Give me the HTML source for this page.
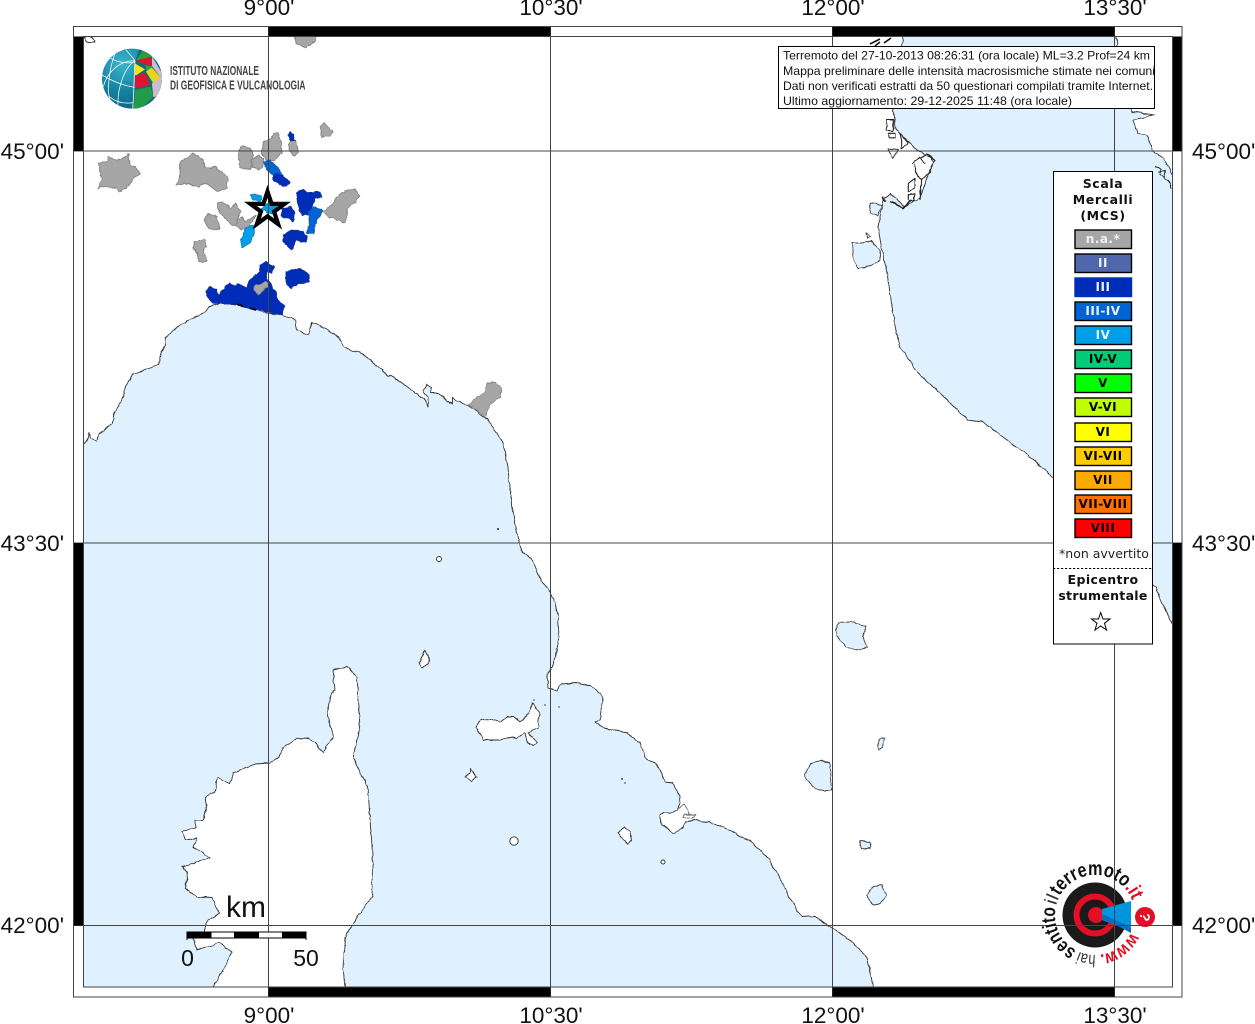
<!DOCTYPE html>
<html><head><meta charset="utf-8"><title>Mappa intensità macrosismiche</title>
<style>
html,body{margin:0;padding:0;background:#fff}
svg{display:block}
.gl{font:22.5px "Liberation Sans",sans-serif;fill:#111}
.hd{font:12px "Liberation Sans",sans-serif;fill:#111}
.lt{font:bold 12.5px "DejaVu Sans",sans-serif;fill:#111;text-anchor:middle;letter-spacing:.6px}
.sw{font:bold 12px "DejaVu Sans",sans-serif;text-anchor:middle;letter-spacing:.5px}
.isl{fill:#fff;stroke:#333;stroke-width:.9;stroke-linejoin:round}
.lake{fill:#dff1ff;stroke:#444;stroke-width:.9;stroke-linejoin:round}
.g{fill:#a6a6a6;stroke:#808080;stroke-width:2.5;stroke-linejoin:round}
.b3{fill:#002db8;stroke:#13309a;stroke-width:2.5;stroke-linejoin:round}
.b34{fill:#0064d2;stroke:#1a55a8;stroke-width:2.5;stroke-linejoin:round}
.b4{fill:#009ee8;stroke:#1b80bb;stroke-width:2.5;stroke-linejoin:round}
</style></head>
<body>
<svg width="1255" height="1024" viewBox="0 0 1255 1024" xmlns="http://www.w3.org/2000/svg">
<defs>
<filter id="rough" filterUnits="userSpaceOnUse" x="0" y="0" width="1255" height="1024" color-interpolation-filters="sRGB">
<feTurbulence type="fractalNoise" baseFrequency=".14" numOctaves="2" seed="4" result="n"/>
<feDisplacementMap in="SourceGraphic" in2="n" scale="3.2" xChannelSelector="R" yChannelSelector="G"/>
</filter>
<filter id="rough2" filterUnits="userSpaceOnUse" x="0" y="0" width="1255" height="1024" color-interpolation-filters="sRGB">
<feTurbulence type="fractalNoise" baseFrequency=".22" numOctaves="2" seed="9" result="n"/>
<feDisplacementMap in="SourceGraphic" in2="n" scale="3" xChannelSelector="R" yChannelSelector="G"/>
</filter>
<clipPath id="inner"><rect x="83.5" y="36.5" width="1089" height="950.5"/></clipPath>
<radialGradient id="gl" cx="35%" cy="25%" r="85%"><stop offset="0" stop-color="#3cb6cf"/><stop offset=".55" stop-color="#14829f"/><stop offset="1" stop-color="#0b5f7c"/></radialGradient>
<clipPath id="gc"><circle cx="126" cy="116" r="90"/></clipPath>
<clipPath id="hc"><rect x="779" y="47" width="375" height="61"/></clipPath>
<path id="arc" d="M1135,915 A40,40 0 1 1 1055,915 A40,40 0 1 1 1135,915"/>
</defs>
<rect width="1255" height="1024" fill="#fff"/>

<g clip-path="url(#inner)">
<g filter="url(#rough)">
<!-- Tyrrhenian / Ligurian sea with Corsica cut out -->
<path fill="#dff1ff" stroke="#333" stroke-width=".9" stroke-linejoin="round" d="M65,450 L83.5,445 L88,438 L89,433 L90,439 L97,441 L98,435 L105,429 L113,423 L113,415 L118,408 L123,397 L125,387 L133,374 L145,370 L158,365 L160,355 L166,345 L165,338 L173,330 L187,321 L200,315 L213,305 L223,302 L237,305 L253,309 L268,313 L280,315 L295,319 L297,330 L309,335 L312,323 L328,330 L340,338 L342,345 L350,350 L360,352 L373,363 L382,369 L388,377 L392,376 L405,385 L425,400 L428,407 L428,398 L423,390 L427,385 L432,387 L430,393 L438,393 L452,404 L452,397 L455,401 L468,405 L485,417 L495,430 L503,443 L508,467 L510,493 L515,523 L520,548 L532,560 L537,572 L542,582 L550,592 L555,603 L558,615 L559,637 L556,655 L553,667 L547,674 L548,688 L557,691 L560,684 L577,683 L590,686 L597,690 L603,698 L601,710 L600,720 L595,722 L604,728 L627,733 L640,743 L646,758 L658,765 L665,782 L673,783 L680,797 L678,810 L672,813 L665,812 L660,815 L662,825 L673,833 L683,828 L685,822 L695,820 L713,823 L733,832 L753,843 L768,858 L782,882 L792,902 L802,917 L815,916 L828,926 L840,933 L853,943 L867,957 L870,970 L873,987 L875,1005 L345,1005 L345,987 L343,968 L345,937 L357,917 L372,897 L373,867 L372,845 L370,820 L368,787 L353,758 L358,735 L360,720 L358,695 L357,677 L347,667 L333,670 L335,690 L330,698 L327,713 L333,737 L323,753 L315,742 L308,739 L298,738 L283,747 L279,757 L270,763 L255,764 L240,770 L233,773 L230,783 L217,778 L215,792 L205,797 L207,810 L202,820 L195,820 L195,828 L182,832 L185,840 L197,838 L193,847 L203,853 L210,858 L182,867 L188,873 L185,888 L197,897 L212,898 L216,907 L220,913 L205,923 L205,933 L193,938 L197,950 L220,943 L232,952 L223,970 L213,987 L210,1005 L65,1005 Z"/>
<!-- Adriatic sea -->
<path fill="#dff1ff" stroke="#333" stroke-width=".9" stroke-linejoin="round" d="M905,25 L893,110 L895,127 L908,142 L920,152 L935,160 L928,175 L920,198 L905,207 L890,193 L883,200 L878,227 L882,250 L887,273 L893,313 L900,347 L920,375 L940,393 L967,420 L983,422 L1030,457 L1051,475 L1100,530 L1155,587 L1172.5,625 L1190,660 L1190,190 L1172.5,175 L1163,158 L1153,152 L1147,135 L1137,133 L1133,120 L1155,115 L1132,112 L1125,90 L1115,60 L1117,40 L1113,25 Z"/>
<!-- islands -->
<path class="isl" d="M476,727 L480,720 L490,719 L500,722 L507,717 L514,717 L520,722 L527,716 L533,703 L539,713 L538,728 L528,733 L538,743 L533,746 L527,742 L525,733 L517,738 L512,737 L507,738 L500,740 L483,740 Z"/>
<path class="isl" d="M419,663 L425,650 L429,658 L428,664 L423,668 Z"/>
<path class="isl" d="M465,777 L470,774 L471,768 L473,774 L477,777 L472,781 Z"/>
<path class="isl" d="M618,833 L624,827 L630,832 L632,840 L628,844 L623,840 Z"/>
<path class="isl" d="M84,37 L92,37 L95,42 L87,42 Z"/>
<path class="lake" d="M836,628 L838,623 L850,622 L866,626 L863,637 L867,648 L855,650 L845,646 L837,636 Z"/>
<path class="lake" d="M805,775 L810,763 L820,761 L830,763 L832,790 L820,790 L812,786 L806,780 Z"/>
<path class="lake" d="M860,841 L870,842 L871,848 L861,849 Z"/>
<path class="lake" d="M866,895 L874,886 L882,885 L886,895 L880,904 L873,905 Z"/>
<path class="lake" d="M877,746 L880,739 L884,738 L882,747 L879,750 Z"/>
<path class="lake" d="M852,243 L862,243 L871,241 L880,250 L880,260 L871,266 L858,268 L853,260 Z"/>
<path class="lake" d="M866,233 L870,237 L867,239 Z"/>
<path class="lake" d="M870,203 L882,205 L878,215 L870,213 Z"/>
<path class="isl" d="M888,149 L898,150 L893,159 Z"/>
<!-- Adriatic coastal detail -->
<g transform="translate(840,100) scale(.33333)" fill="none" stroke="#222" stroke-width="3.2" stroke-linejoin="round">
<path d="M215,190 L240,175 L262,160 L285,180 L270,215 L245,240 L240,300 M225,190 L225,215 L245,240 M262,160 L280,185 M238,172 L258,190"/>
<path d="M205,250 L225,235 L225,265 L205,275 Z M205,285 L225,280 L220,305 L205,300 Z M140,60 L160,60 L160,95 L140,90 Z M145,100 L165,100 L165,112 L148,112 Z M180,100 L205,130 L185,145 L185,120 Z"/>
<path d="M150,305 L170,315 L190,323 L215,300" stroke-width="5"/>
<path d="M128,290 L135,305" stroke-width="5"/>
<path d="M945,200 L965,205 L960,225 L985,240 L995,265 M955,215 L975,212 L972,235" stroke-width="3"/>
</g>
<path d="M678,809 L684,803 L690,815 M684,814 L695,815 L692,818 L683,817 Z" fill="none" stroke="#777" stroke-width="1"/>
</g>
<circle class="isl" cx="439" cy="559" r="2.5"/>
<circle class="isl" cx="514" cy="841" r="4.2"/>
<circle class="isl" cx="663" cy="862" r="2"/>
<circle cx="498" cy="529" r="1" fill="#222"/>
<circle cx="534" cy="700" r=".7" fill="#222"/><circle cx="545" cy="705" r=".7" fill="#222"/><circle cx="559" cy="707" r=".7" fill="#222"/><circle cx="622" cy="779" r=".9" fill="#222"/><circle cx="625" cy="783" r=".7" fill="#222"/>
<path d="M870,44 L880,39 M884,43 L891,38 M875,46 L880,42" stroke="#111" stroke-width="1.6" fill="none"/>
</g>

<!-- Municipalities -->
<g filter="url(#rough2)">
<g transform="translate(70,20) scale(.33333)">
<path class="g" d="M85,430 L110,425 L115,410 L135,420 L160,415 L175,400 L180,435 L195,440 L210,460 L190,475 L180,495 L150,515 L135,505 L100,500 L85,505 L95,480 Z"/>
<path class="g" d="M318,495 L330,470 L330,425 L370,400 L400,420 L405,445 L435,440 L475,470 L470,505 L440,515 L410,490 L385,500 L345,490 Z"/>
<path class="g" d="M505,395 L515,378 L540,385 L550,405 L540,448 L510,445 Z"/>
<path class="g" d="M545,420 L565,405 L580,415 L580,440 L565,450 L545,440 Z"/>
<path class="g" d="M580,365 L605,355 L610,340 L625,340 L635,370 L635,400 L615,420 L590,420 L575,400 Z"/>
<path class="g" d="M655,370 L675,360 L685,395 L675,410 L660,395 Z"/>
<path class="g" d="M752,320 L762,308 L775,320 L790,335 L778,348 L755,350 Z"/>
<path class="g" d="M670,45 L740,45 L735,65 L705,82 L680,70 Z"/>
<path class="g" d="M760,575 L785,555 L800,530 L825,512 L855,507 L868,525 L855,548 L835,560 L830,590 L825,610 L800,598 L775,590 Z"/>
<path class="g" d="M440,550 L460,545 L480,565 L497,550 L512,575 L500,600 L510,615 L485,615 L460,590 L445,570 Z"/>
<path class="g" d="M500,600 L515,590 L525,605 L560,585 L550,600 L530,625 L515,630 L500,618 Z"/>
<path class="g" d="M402,600 L415,580 L440,590 L450,625 L430,630 L410,620 Z"/>
<path class="g" d="M372,665 L405,657 L410,680 L400,690 L410,725 L385,725 L380,695 L370,685 Z"/>
<path class="b34" d="M580,425 L600,420 L625,445 L640,470 L620,470 L600,460 L590,445 Z"/>
<path class="b3" d="M660,335 L670,345 L675,362 L660,362 L655,345 Z"/>
<path class="b3" d="M610,465 L625,460 L640,470 L660,485 L650,500 L630,495 L610,480 Z"/>
<path class="b3" d="M680,515 L700,508 L712,518 L750,515 L755,530 L735,535 L725,565 L715,585 L695,585 L685,560 Z"/>
<path class="b34" d="M715,575 L730,562 L760,570 L740,600 L730,640 L712,640 L718,605 Z"/>
<path class="b3" d="M635,565 L665,560 L675,580 L670,605 L655,595 L635,590 Z"/>
<path class="b3" d="M640,645 L665,630 L700,635 L712,650 L708,668 L680,660 L665,690 L655,680 L640,665 Z"/>
<path class="b4" d="M512,660 L520,640 L530,620 L550,615 L555,640 L535,675 L515,682 Z"/>
<path class="b4" d="M540,525 L555,520 L575,530 L570,545 L550,540 Z"/>
<path class="b4" d="M575,565 L590,550 L620,560 L610,580 L590,580 Z"/>
<path class="b3" d="M408,815 L420,800 L438,808 L445,825 L465,800 L480,790 L495,797 L505,790 L530,805 L535,785 L550,770 L570,755 L570,735 L590,725 L612,740 L605,760 L590,755 L590,775 L600,790 L615,810 L625,840 L645,860 L635,885 L590,875 L540,865 L500,855 L450,850 L430,850 L412,830 Z"/>
<path class="g" d="M555,795 L590,785 L595,800 L575,815 L565,825 L552,810 Z"/>
<path class="b3" d="M648,755 L690,745 L718,765 L718,785 L690,790 L660,805 L648,790 Z"/>
</g>
<path class="g" style="stroke-width:.7" d="M468,405 L477,397 L485,392 L487,383 L495,382 L502,388 L500,397 L490,405 L485,417 L477,410 Z"/>
</g>
<path d="M237,304 L243,306 M250,308 L256,310" stroke="#111" stroke-width="2" fill="none"/>

<!-- INGV logo -->
<g transform="translate(90,40) scale(.33333)">
<circle cx="126" cy="116" r="90" fill="url(#gl)"/>
<g clip-path="url(#gc)">
<path d="M136,62 L136,210 L230,210 L230,30 L150,20 Z" fill="#0b6b7f"/>
<path d="M138,60 L160,30 L190,50 L150,62 Z" fill="#2f9e3a"/>
<path d="M138,62 L182,50 L186,76 L160,72 Z" fill="#e2132f"/>
<path d="M186,48 L216,100 L216,135 L190,172 L186,130 L210,110 L186,78 Z" fill="#cdbccf"/>
<path d="M135,70 L165,88 L140,105 L135,105 Z" fill="#f5e313"/>
<path d="M165,75 L186,78 L180,88 L170,92 Z" fill="#2f9e3a"/>
<path d="M168,95 L185,82 L210,110 L190,130 Z" fill="#ead41b"/>
<path d="M135,108 L165,98 L180,135 L135,145 Z" fill="#e2132f"/>
<path d="M135,150 L182,140 L190,170 L160,200 L130,210 Z" fill="#239a48"/>
<path d="M186,135 L218,125 L205,165 L192,172 Z" fill="#cdbccf"/>
<path d="M192,172 L205,165 L198,178 Z" fill="#e2132f"/>
<g fill="none" stroke="#fff" stroke-width="2.2">
<path d="M135,62 C132,110 132,160 128,206"/>
<path d="M135,62 C100,85 82,150 84,195"/>
<path d="M135,62 C85,62 50,100 40,140"/>
<path d="M135,62 L108,30"/>
<path d="M75,40 C58,85 50,150 60,180"/>
<path d="M36,105 C70,125 105,138 134,142"/>
<path d="M62,55 C85,68 115,72 135,66"/>
<path d="M58,170 C80,188 105,192 130,188"/>
</g>
</g>
</g>
<text x="170" y="75" style="font:bold 12.5px 'Liberation Sans Narrow','Liberation Sans',sans-serif;fill:#444" textLength="89" lengthAdjust="spacingAndGlyphs">ISTITUTO NAZIONALE</text>
<text x="170" y="89.5" style="font:bold 12.5px 'Liberation Sans Narrow','Liberation Sans',sans-serif;fill:#444" textLength="135.5" lengthAdjust="spacingAndGlyphs">DI GEOFISICA E VULCANOLOGIA</text>

<!-- grid -->
<g stroke="#444" stroke-width="1" fill="none">
<path d="M268.5,27V997M550.5,27V997M832.5,27V997M1114.5,27V997M73.5,151H1182M73.5,543H1182M73.5,925.5H1182"/>
</g>
<!-- frame -->
<g fill="#000">
<rect x="268.5" y="27" width="282" height="9.5"/><rect x="832.5" y="27" width="282" height="9.5"/>
<rect x="268.5" y="987" width="282" height="9.5"/><rect x="832.5" y="987" width="282" height="9.5"/>
<rect x="74" y="36.5" width="9.5" height="114.5"/><rect x="74" y="543" width="9.5" height="382.5"/>
<rect x="1172.5" y="36.5" width="9.5" height="114.5"/><rect x="1172.5" y="543" width="9.5" height="382.5"/>
</g>
<rect x="73.5" y="26.5" width="1108.5" height="970.5" fill="none" stroke="#444"/>
<rect x="83.5" y="36.5" width="1089" height="950.5" fill="none" stroke="#444"/>

<!-- axis labels -->
<g class="gl" text-anchor="middle">
<text x="269" y="15">9°00'</text><text x="551" y="15">10°30'</text><text x="833" y="15">12°00'</text><text x="1115" y="15">13°30'</text>
<text x="269" y="1023">9°00'</text><text x="551" y="1023">10°30'</text><text x="833" y="1023">12°00'</text><text x="1115" y="1023">13°30'</text>
</g>
<g class="gl" text-anchor="end">
<text x="64" y="159">45°00'</text><text x="64" y="551">43°30'</text><text x="64" y="933">42°00'</text>
</g>
<g class="gl">
<text x="1192" y="159">45°00'</text><text x="1192" y="551">43°30'</text><text x="1192" y="933">42°00'</text>
</g>

<!-- epicentre star -->
<path d="M267.5,191.5 L271.6,203.9 L284.6,203.9 L274.1,211.6 L278.1,224 L267.5,216.3 L256.9,224 L260.9,211.6 L250.4,203.9 L263.4,203.9 Z" fill="none" stroke="#000" stroke-width="4.2" stroke-miterlimit="10"/>

<!-- header box -->
<rect x="778.5" y="46.5" width="376" height="62" fill="#fff" stroke="#000"/>
<g class="hd" clip-path="url(#hc)">
<text x="783" y="59.5" textLength="367" lengthAdjust="spacingAndGlyphs">Terremoto del 27-10-2013 08:26:31 (ora locale) ML=3.2 Prof=24 km</text>
<text x="783" y="75" textLength="372" lengthAdjust="spacingAndGlyphs">Mappa preliminare delle intensità macrosismiche stimate nei comuni</text>
<text x="783" y="90" textLength="370" lengthAdjust="spacingAndGlyphs">Dati non verificati estratti da 50 questionari compilati tramite Internet.</text>
<text x="783" y="105" textLength="289" lengthAdjust="spacingAndGlyphs">Ultimo aggiornamento: 29-12-2025 11:48 (ora locale)</text>
</g>

<!-- legend -->
<rect x="1053.5" y="171.5" width="99" height="472.5" fill="#fff" stroke="#000"/>
<text class="lt" x="1103" y="188">Scala</text>
<text class="lt" x="1103" y="204">Mercalli</text>
<text class="lt" x="1103" y="220">(MCS)</text>
<g stroke="#000" stroke-width="1.4">
<rect x="1075" y="230" width="56.5" height="18.5" fill="#a6a6a6"/>
<rect x="1075" y="254" width="56.5" height="18.5" fill="#5066ad"/>
<rect x="1075" y="278" width="56.5" height="18.5" fill="#002db8" stroke="#002db8"/>
<rect x="1075" y="302" width="56.5" height="18.5" fill="#0064d2"/>
<rect x="1075" y="326" width="56.5" height="18.5" fill="#009ee8"/>
<rect x="1075" y="350" width="56.5" height="18.5" fill="#00cc77"/>
<rect x="1075" y="374" width="56.5" height="18.5" fill="#00ff00"/>
<rect x="1075" y="398" width="56.5" height="18.5" fill="#bfff00"/>
<rect x="1075" y="423" width="56.5" height="18.5" fill="#ffff00"/>
<rect x="1075" y="447" width="56.5" height="18.5" fill="#ffcc00"/>
<rect x="1075" y="471" width="56.5" height="18.5" fill="#ffaa00"/>
<rect x="1075" y="495" width="56.5" height="18.5" fill="#ff7000"/>
<rect x="1075" y="519" width="56.5" height="18.5" fill="#ff0000"/>
</g>
<g class="sw" fill="#eef0f8">
<text x="1103" y="243">n.a.*</text>
<text x="1103" y="267">II</text><text x="1103" y="291">III</text><text x="1103" y="315">III-IV</text><text x="1103" y="339">IV</text>
</g>
<g class="sw" fill="#000">
<text x="1103" y="363">IV-V</text><text x="1103" y="387">V</text><text x="1103" y="411">V-VI</text><text x="1103" y="436">VI</text><text x="1103" y="460">VI-VII</text><text x="1103" y="484">VII</text><text x="1103" y="508">VII-VIII</text><text x="1103" y="532">VIII</text>
</g>
<text x="1104" y="558" text-anchor="middle" style="font:12.5px 'DejaVu Sans',sans-serif;fill:#222">*non avvertito</text>
<path d="M1053,568.5H1152" stroke="#000" stroke-dasharray="2.2 1.8"/>
<text class="lt" x="1103" y="584" style="letter-spacing:.4px">Epicentro</text>
<text class="lt" x="1103" y="600" style="letter-spacing:.3px">strumentale</text>
<path d="M1100.7,612.5 L1103,619 L1110,619 L1104.5,623.2 L1106.5,630 L1100.7,626 L1095,630 L1097,623.2 L1091.5,619 L1098.5,619 Z" fill="#fff" stroke="#000" stroke-width="1"/>

<!-- scale bar -->
<text x="226" y="917" style="font:30px 'Liberation Sans',sans-serif;fill:#111">km</text>
<path d="M187,932V940M306,932V940" stroke="#000" stroke-width="1"/>
<rect x="187" y="932" width="119" height="6" fill="#fff" stroke="#000" stroke-width="1"/>
<g fill="#000"><rect x="187" y="932" width="24.5" height="6"/><rect x="234" y="932" width="25" height="6"/><rect x="282" y="932" width="24" height="6"/></g>
<text x="187.5" y="966" text-anchor="middle" style="font:23px 'Liberation Sans',sans-serif;fill:#111">0</text>
<text x="306" y="966" text-anchor="middle" style="font:23px 'Liberation Sans',sans-serif;fill:#111">50</text>

<!-- haisentito logo -->
<circle cx="1095" cy="915" r="32.5" fill="#1a1a1a"/>
<circle cx="1095" cy="915" r="18.5" fill="none" stroke="#e30f25" stroke-width="6"/>
<circle cx="1096" cy="915" r="8" fill="#e30f25"/>
<path d="M1102,909 L1131,901 L1131,933 L1120,927 L1102,920 Z" fill="#0096de"/>
<path d="M1102,920 L1120,927 L1131,933 L1131,928 L1120,922 L1102,914 Z" fill="#0a6fc0"/>
<circle cx="1145" cy="917" r="10" fill="#e30f25"/>
<text x="1145" y="922" text-anchor="middle" transform="rotate(100 1145 917)" style="font:bold 14px 'Liberation Sans',sans-serif;fill:#fff">?</text>
<line x1="1114.5" y1="862" x2="1114.5" y2="980" stroke="#444" stroke-width="1"/>
<line x1="1030" y1="925.5" x2="1172" y2="925.5" stroke="#444" stroke-width="1"/>
<g style="font-family:'Liberation Sans',sans-serif">
<text style="font-size:18px;font-weight:bold;fill:#e30f25"><textPath href="#arc" startOffset="18" textLength="40" lengthAdjust="spacingAndGlyphs">www.</textPath></text>
<text style="font-size:17px;fill:#333"><textPath href="#arc" startOffset="62" textLength="17" lengthAdjust="spacingAndGlyphs">hai</textPath></text>
<text style="font-size:20px;font-weight:bold;fill:#111"><textPath href="#arc" startOffset="82" textLength="51" lengthAdjust="spacingAndGlyphs">sentito</textPath></text>
<text style="font-size:18px;fill:#333"><textPath href="#arc" startOffset="135" textLength="9" lengthAdjust="spacingAndGlyphs">il</textPath></text>
<text style="font-size:20px;font-weight:bold;fill:#111"><textPath href="#arc" startOffset="145" textLength="76" lengthAdjust="spacingAndGlyphs">terremoto</textPath></text>
<text style="font-size:20px;font-weight:bold;fill:#e30f25"><textPath href="#arc" startOffset="221" textLength="15" lengthAdjust="spacingAndGlyphs">.it</textPath></text>
</g>
</svg>
</body></html>
